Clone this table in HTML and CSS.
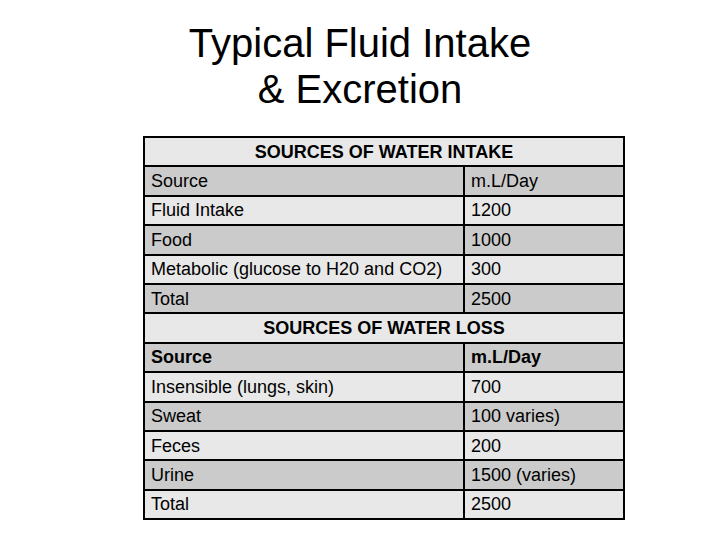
FILE: index.html
```html
<!DOCTYPE html>
<html>
<head>
<meta charset="utf-8">
<link rel="stylesheet" href="styles.css">
</head>
<body>
<h1 class="title">Typical Fluid Intake<br>&amp; Excretion</h1>
<table class="fluid">
  <tr class="light"><th colspan="2">SOURCES OF WATER INTAKE</th></tr>
  <tr class="dark"><td class="c1">Source</td><td>m.L/Day</td></tr>
  <tr class="light"><td class="c1">Fluid Intake</td><td>1200</td></tr>
  <tr class="dark"><td class="c1">Food</td><td>1000</td></tr>
  <tr class="light"><td class="c1">Metabolic (glucose to H20 and CO2)</td><td>300</td></tr>
  <tr class="dark"><td class="c1">Total</td><td>2500</td></tr>
  <tr class="light"><th colspan="2">SOURCES OF WATER LOSS</th></tr>
  <tr class="dark bold"><td class="c1">Source</td><td>m.L/Day</td></tr>
  <tr class="light"><td class="c1">Insensible (lungs, skin)</td><td>700</td></tr>
  <tr class="dark"><td class="c1">Sweat</td><td>100 varies)</td></tr>
  <tr class="light"><td class="c1">Feces</td><td>200</td></tr>
  <tr class="dark"><td class="c1">Urine</td><td>1500 (varies)</td></tr>
  <tr class="light"><td class="c1">Total</td><td>2500</td></tr>
</table>
</body>
</html>
```
FILE: styles.css
```css
html, body {
  margin: 0;
  padding: 0;
  background: #ffffff;
}
body {
  font-family: "Liberation Sans", Arial, sans-serif;
  color: #000;
}
.title {
  margin: 20px 0 0 0;
  font-weight: normal;
  font-size: 40px;
  line-height: 46px;
  text-align: center;
}
.fluid {
  margin: 24px 0 0 143px;
  width: 482px;
  border-collapse: collapse;
  border: 2px solid #000;
  font-size: 18px;
}
.fluid th, .fluid td {
  border: 2px solid #000;
  height: 29.4px;
  padding: 0 0 0 6px;
  text-align: left;
  vertical-align: middle;
  box-sizing: border-box;
  line-height: 20px;
}
.fluid th {
  text-align: center;
  padding: 0;
}
.fluid .c1 {
  width: 320px;
}
.light { background: #e8e8e8; }
.dark { background: #cbcbcb; }
.bold td { font-weight: bold; }
```
